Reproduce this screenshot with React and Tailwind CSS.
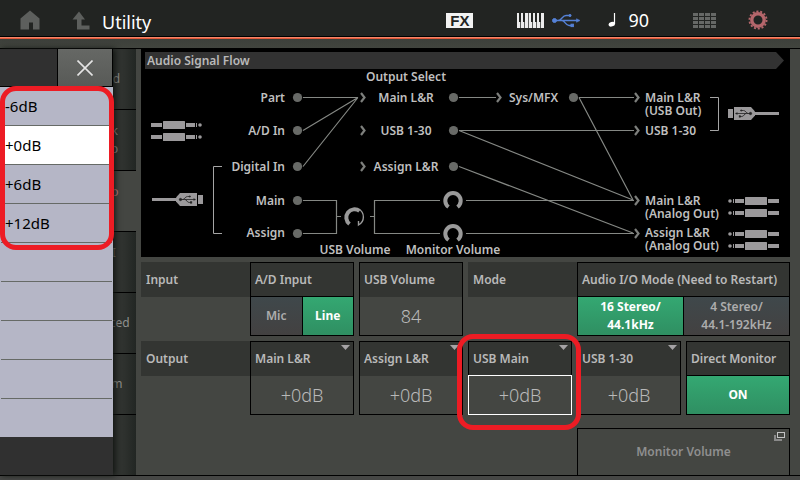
import { useState } from 'react';

const gains = ['-6dB', '+0dB', '+6dB', '+12dB'];

const tabs = ['Sound', 'Quick\nSetup', 'Audio\nI/O', 'MIDI\nI/O', 'Advanced', 'System'];

function HomeIcon() {
    return (
        <svg width="20" height="20" viewBox="0 0 20 20" fill="#5d5f5d">
            <path d="M10 0.5 L19.5 8.5 V19.5 H13 V12.5 H9 V19.5 H0.5 V8.5 Z" />
        </svg>
    );
}

function UpIcon() {
    return (
        <svg width="18" height="20" viewBox="0 0 18 20" fill="#5d5f5d">
            <path d="M7 1.5 L13 9.5 H9.5 V15.5 H17.5 V19.5 H5 V9.5 H0.5 Z" />
        </svg>
    );
}

function KeyboardIcon() {
    return (
        <svg width="27" height="15" viewBox="0 0 27 15" shapeRendering="crispEdges">
            <rect width="27" height="15" fill="#ececec" />
            {[3, 7, 11, 15, 19, 23].map((x) => (
                <rect key={x} x={x} y="0" width="1" height="15" fill="#5a5c5a" />
            ))}
            {[2, 6, 14, 18, 22].map((x) => (
                <rect key={x} x={x} y="0" width="2" height="9" fill="#222422" />
            ))}
        </svg>
    );
}

function UsbSymbol({ color }) {
    return (
        <g fill={color} stroke={color}>
            <path
                d="M2 7.5 H25 M6 7.5 C10 7.5 10 2.5 14 2.5 H17 M10 7.5 C13 7.5 13 12.5 17 12.5 H20"
                fill="none"
                strokeWidth="1.3"
            />
            <circle cx="2.5" cy="7.5" r="2" />
            <circle cx="18" cy="2.5" r="1.1" />
            <rect x="19" y="11.2" width="2.4" height="2.4" />
            <path d="M24.5 5.7 L28 7.5 L24.5 9.3 Z" strokeWidth="0.5" />
        </g>
    );
}

function GridIcon() {
    return (
        <svg width="23" height="15" viewBox="0 0 23 15" fill="#666866" shapeRendering="crispEdges">
            {[0, 4, 8, 12].map((y) =>
                [0, 6, 12, 18].map((x) => (
                    <rect key={`${x}-${y}`} x={x} y={y} width="5" height="3" />
                ))
            )}
        </svg>
    );
}

function GearIcon() {
    return (
        <svg width="20" height="20" viewBox="0 0 20 20">
            <circle cx="10" cy="10" r="6.2" fill="none" stroke="#b5666b" strokeWidth="3.4" />
            <circle
                cx="10"
                cy="10"
                r="8.6"
                fill="none"
                stroke="#b5666b"
                strokeWidth="1.8"
                strokeDasharray="2.1 1.76"
            />
        </svg>
    );
}

function Header() {
    return (
        <header className="border-b border-black bg-linear-to-b from-[#2d302d] to-[#41443e]">
            <div className="flex h-9 items-center bg-[#222422] pl-5 pr-8 pt-1 text-white">
                <button aria-label="Home"><HomeIcon /></button>
                <button aria-label="Back" className="ml-8"><UpIcon /></button>
                <h1 className="ml-3 pt-1 text-lg">Utility</h1>
                <div className="ml-auto flex items-center">
                    <span className="w-[27px] bg-[#f2f2f2] text-center font-['Liberation_Sans',sans-serif] text-[15px] font-bold leading-[15px] text-[#222422]">
                        FX
                    </span>
                    <span className="ml-11"><KeyboardIcon /></span>
                    <svg className="ml-2" width="30" height="15" viewBox="0 0 30 15">
                        <UsbSymbol color="#5581d6" />
                    </svg>
                    <svg className="ml-[26px]" width="8" height="14" viewBox="0 0 8 14">
                        <path d="M6.5 0 V11" stroke="#fff" strokeWidth="1.2" />
                        <ellipse cx="3.8" cy="11.2" rx="3.3" ry="2.2" fill="#fff" transform="rotate(-18 3.8 11.2)" />
                    </svg>
                    <span className="ml-3 text-lg">90</span>
                    <span className="ml-11"><GridIcon /></span>
                    <button aria-label="Settings" className="ml-8"><GearIcon /></button>
                </div>
            </div>
            <div className="h-[3px] border-t border-black bg-linear-to-b from-[#ff9c80] to-[#d63c1c]" />
            <div className="h-[9px]" />
        </header>
    );
}

function Jack({ x, y, flip }) {
    return (
        <g transform={`translate(${x} ${y}) scale(${flip ? -1 : 1} 1)`} fill="#9b999b">
            <rect x="0" y="-2" width="11" height="4" />
            <rect x="12" y="-4" width="22" height="8" rx="0.5" />
            <rect x="35" y="-2" width="9" height="4" />
            <rect x="45" y="-2" width="1" height="4" />
            <circle cx="49" cy="0" r="1.8" />
        </g>
    );
}

function UsbPlug({ x, y, flip }) {
    return (
        <g transform={`translate(${x} ${y}) scale(${flip ? -1 : 1} 1)`} fill="#9b999b">
            <rect x="0" y="-1.5" width="26" height="3" />
            <path d="M24 -2 L28 -6.5 H45 V6.5 H28 L24 2 Z" />
            <rect x="46" y="-4.5" width="5" height="9" />
            <g transform="translate(27 -4.5) scale(0.6)">
                <UsbSymbol color="#222" />
            </g>
        </g>
    );
}

function Knob({ x, y, thin }) {
    if (thin) {
        return (
            <g fill="none" stroke="#9a9a9a">
                <path d={`M${x - 5} ${y + 7} A8 8 0 0 1 ${x + 5} ${y - 6}`} strokeWidth="4" />
                <path d={`M${x + 4} ${y - 8} A9 9 0 0 1 ${x + 4} ${y + 8} V${y + 4}`} strokeWidth="1.4" />
            </g>
        );
    }
    return (
        <path
            d={`M${x - 4.5} ${y + 7} A7.7 7.7 0 1 1 ${x + 4.5} ${y + 7}`}
            fill="none"
            stroke="#9a9a9a"
            strokeWidth="4"
        />
    );
}

const dots = [
    [156.5, 48.5], [156.5, 81.5], [156.5, 117.5], [156.5, 151.5], [156.5, 184.5],
    [312.5, 48.5], [312.5, 81.5], [312.5, 117.5], [432.5, 48.5]
];

const chevrons = [
    [220, 48.5], [220, 81.5], [220, 117.5], [356, 48.5],
    [494, 48.5], [494, 81.5], [494, 151.5], [494, 184.5]
];

const flowLabels = [
    ['Output Select', 265, 32, 'middle'],
    ['Part', 144, 53, 'end'],
    ['A/D In', 144, 86, 'end'],
    ['Digital In', 144, 122, 'end'],
    ['Main', 144, 156, 'end'],
    ['Assign', 144, 188, 'end'],
    ['Main L&R', 265, 53, 'middle'],
    ['USB 1-30', 265, 86, 'middle'],
    ['Assign L&R', 265, 122, 'middle'],
    ['USB Volume', 214, 205, 'middle'],
    ['Monitor Volume', 312, 205, 'middle'],
    ['Sys/MFX', 368, 53, 'start'],
    ['Main L&R', 504, 53, 'start', '(USB Out)'],
    ['USB 1-30', 504, 86, 'start'],
    ['Main L&R', 504, 156, 'start', '(Analog Out)'],
    ['Assign L&R', 504, 188, 'start', '(Analog Out)']
];

function SignalFlow() {
    return (
        <svg viewBox="0 0 649 208" className="block w-full bg-black text-xs font-semibold" role="img" aria-label="Audio Signal Flow">
            <path d="M4 3 H635 L643 11.5 L635 20 H4 Z" fill="#323232" />
            <text x="6" y="16" fill="#b9b9b9">Audio Signal Flow</text>

            <g fill="none" stroke="#858884" strokeWidth="1.2">
                <path d="M162 48.5 H217 M162 81.5 L217 48.5 M162 117.5 L217 48.5" />
                <path d="M162 151.5 H195.5 V184.5 H162 M195.5 167.5 H200" />
                <path d="M299 151.5 H233.5 V184.5 H299 M229 167.5 H233.5" />
                <path d="M318 48.5 H355 M438 48.5 H493 M438 48.5 L492 151" />
                <path d="M318 81.5 H493 M318 81.5 L492 151 M318 117.5 L492 184" />
                <path d="M325 151.5 H493 M325 184.5 H493" />
            </g>
            <g fill="none" stroke="#a5a5a5">
                <path d="M81 117.5 H72.5 V184.5 H81" />
                <path d="M569 48.5 H577.5 V81.5 H569" />
            </g>

            {dots.map(([x, y]) => (
                <circle key={`${x}-${y}`} cx={x} cy={y} r="4.6" fill="#686a67" />
            ))}
            {chevrons.map(([x, y]) => (
                <path
                    key={`${x}-${y}`}
                    d={`M${x} ${y - 4.5} L${x + 3.5} ${y} L${x} ${y + 4.5}`}
                    fill="none"
                    stroke="#7d7f7c"
                    strokeWidth="2.2"
                />
            ))}

            <Knob x={213.5} y={168} thin />
            <Knob x={312} y={151} />
            <Knob x={312} y={184} />

            <Jack x={10} y={76} />
            <Jack x={10} y={88} />
            <Jack x={638} y={152} flip />
            <Jack x={638} y={164} flip />
            <Jack x={638} y={185} flip />
            <Jack x={638} y={197} flip />
            <UsbPlug x={11} y={150.5} />
            <UsbPlug x={638} y={64.5} flip />

            {flowLabels.map(([text, x, y, anchor, note]) => (
                <text key={`${x}-${y}`} x={x} y={y} textAnchor={anchor} fill="#bfbfbf">
                    {text}
                    {note && <tspan x={x} dy="13">{note}</tspan>}
                </text>
            ))}
        </svg>
    );
}

function RowLabel({ children }) {
    return (
        <div className="-mr-[5px] flex h-[35px] items-center bg-[#333532] pl-[5px]">{children}</div>
    );
}

function Cell({ label, htmlFor, wide, arrow, children }) {
    return (
        <div className={`relative flex h-[74px] flex-col border border-black ${wide ? 'col-span-2' : ''}`}>
            <label htmlFor={htmlFor} className="flex h-[34px] items-center whitespace-nowrap bg-[#333532] pl-1">
                {label}
            </label>
            {arrow && (
                <svg className="absolute right-[3px] top-[3px]" width="9" height="5" viewBox="0 0 9 5">
                    <path d="M0 0 H9 L4.5 5 Z" fill="#a5a3a5" />
                </svg>
            )}
            {children}
        </div>
    );
}

function Toggle({ options, value, onChange }) {
    return (
        <div className="-mt-px flex flex-1 divide-x divide-black border-t border-black">
            {options.map((option) => (
                <button
                    key={option}
                    onClick={() => onChange(option)}
                    aria-pressed={value === option}
                    className={`flex-1 whitespace-pre-line leading-[18px] ${
                        value === option
                            ? 'bg-linear-to-b from-[#34a872] to-[#2f8f62] font-bold text-white'
                            : 'bg-linear-to-b from-[#3f484b] to-[#434141] text-[#adadad]'
                    }`}
                >
                    {option}
                </button>
            ))}
        </div>
    );
}

function GainCell({ id, label, value, onChange, selected }) {
    return (
        <Cell label={label} htmlFor={id} arrow>
            <select
                id={id}
                value={value}
                onChange={(e) => onChange(e.target.value)}
                className={`flex-1 appearance-none text-center text-lg font-light outline-none [text-align-last:center] ${
                    selected ? '-mx-px -mb-px -mt-px border border-white' : ''
                }`}
            >
                {gains.map((gain) => (
                    <option key={gain}>{gain}</option>
                ))}
            </select>
        </Cell>
    );
}

export default function App() {
    const [input, setInput] = useState('Line');
    const [volume, setVolume] = useState('84');
    const [mode, setMode] = useState('16 Stereo/\n44.1kHz');
    const [monitor, setMonitor] = useState('ON');
    const [outputs, setOutputs] = useState({ main: '+0dB', assign: '+0dB', usbMain: '+0dB', usb: '+0dB' });

    const setOutput = (name, value) => setOutputs({ ...outputs, [name]: value });

    return (
        <div className="flex min-h-screen flex-col bg-[#464745] font-['Noto_Sans',sans-serif] text-xs text-[#b9b9b9]">
            <Header />

            <div className="relative flex flex-1 border-b border-black bg-[#444642]">
                <nav className="flex w-[136px] flex-col bg-linear-to-r from-[#303330] from-90% to-[#222623] pl-[68px]">
                    {tabs.map((tab) => (
                        <button
                            key={tab}
                            className={`h-[61px] whitespace-pre-line border-b border-black px-1 text-center leading-[18px] ${
                                tab === 'Audio\nI/O' ? 'bg-[#444642] text-[#c08084]' : 'text-[#8f918f]'
                            }`}
                        >
                            {tab}
                        </button>
                    ))}
                </nav>

                {/* Gain list opened from the selected output */}
                <aside className="absolute inset-y-0 left-0 w-[113px] bg-[#303030] shadow-[2px_0_6px_#101410] text-black">
                    <div className="flex h-[38px] justify-end border-b border-black">
                        <button
                            aria-label="Close"
                            className="flex w-14 items-center justify-center border-x border-black bg-linear-to-b from-[#666865] to-[#585a57]"
                        >
                            <svg width="16" height="16" viewBox="0 0 16 16" stroke="#e4e4e4" strokeWidth="1.6">
                                <path d="M0.5 0.5 L15.5 15.5 M15.5 0.5 L0.5 15.5" />
                            </svg>
                        </button>
                    </div>
                    <ul className="h-[350px] bg-[#b5b6c6] px-px">
                        {[...gains, '', '', '', ''].map((gain, i) => (
                            <li key={i} className="h-[39px] border-b border-[#666a66]">
                                {gain && (
                                    <button
                                        onClick={() => setOutput('usbMain', gain)}
                                        className={`h-full w-full pl-1 text-left text-[15px] ${
                                            gain === outputs.usbMain ? 'bg-white' : ''
                                        }`}
                                    >
                                        {gain}
                                    </button>
                                )}
                            </li>
                        ))}
                    </ul>
                    <div className="pointer-events-none absolute -right-px left-0 top-[37px] h-[164px] rounded-2xl border-[5px] border-[#ed1c24]" />
                </aside>

                <main className="flex flex-1 flex-col pl-[5px] pr-[10px]">
                    <SignalFlow />

                    <div className="mt-[5px] grid grid-cols-6 gap-[5px] font-semibold">
                        <RowLabel>Input</RowLabel>
                        <Cell label="A/D Input">
                            <Toggle options={['Mic', 'Line']} value={input} onChange={setInput} />
                        </Cell>
                        <Cell label="USB Volume" htmlFor="usb-volume">
                            <input
                                id="usb-volume"
                                value={volume}
                                onChange={(e) => setVolume(e.target.value)}
                                className="w-full flex-1 text-center text-lg font-light outline-none"
                            />
                        </Cell>
                        <RowLabel>Mode</RowLabel>
                        <Cell label="Audio I/O Mode (Need to Restart)" wide>
                            <Toggle
                                options={['16 Stereo/\n44.1kHz', '4 Stereo/\n44.1-192kHz']}
                                value={mode}
                                onChange={setMode}
                            />
                        </Cell>

                        <RowLabel>Output</RowLabel>
                        <GainCell id="main" label="Main L&R" value={outputs.main} onChange={(v) => setOutput('main', v)} />
                        <GainCell id="assign" label="Assign L&R" value={outputs.assign} onChange={(v) => setOutput('assign', v)} />
                        <div className="relative">
                            <GainCell id="usb-main" label="USB Main" value={outputs.usbMain} onChange={(v) => setOutput('usbMain', v)} selected />
                            <div className="pointer-events-none absolute -bottom-[15px] -left-[11px] -right-[9px] -top-[7px] z-10 rounded-2xl border-[5px] border-[#ed1c24]" />
                        </div>
                        <GainCell id="usb" label="USB 1-30" value={outputs.usb} onChange={(v) => setOutput('usb', v)} />
                        <Cell label="Direct Monitor">
                            <Toggle options={['ON']} value={monitor} onChange={() => setMonitor(monitor === 'ON' ? 'OFF' : 'ON')} />
                        </Cell>

                        <button className="relative col-span-2 col-start-5 mt-2 h-[47px] border border-b-0 border-black text-[#8f8f8f]">
                            Monitor Volume
                            <svg className="absolute right-1 top-[3px]" width="11" height="9" viewBox="0 0 11 9" fill="none">
                                <path d="M1 3 V8 H8" stroke="#8a8a8a" strokeWidth="2" />
                                <rect x="3.5" y="0.5" width="7" height="5" stroke="#c4c4c4" />
                            </svg>
                        </button>
                    </div>
                </main>
            </div>

            <footer className="h-1" />
        </div>
    );
}
